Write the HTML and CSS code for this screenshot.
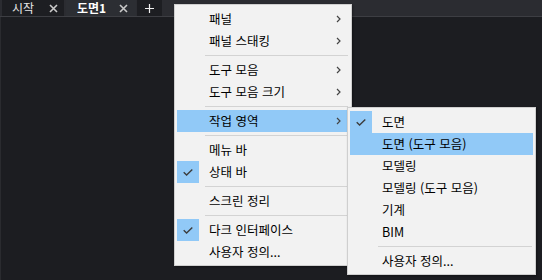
FILE: index.html
```html
<!DOCTYPE html>
<html lang="ko">
<head>
    <meta charset="UTF-8">
    <title>작업 영역 메뉴</title>
    <link rel="stylesheet" href="styles.css">
</head>
<body>

    <!-- Tabs -->
    <div class="tabbar">
        <div class="tab tab-start">
            <span class="tab-title">시작</span>
            <svg class="tab-close" width="9" height="9" viewBox="0 0 9 9"><path d="M1 1L8 8M8 1L1 8"/></svg>
        </div>
        <div class="tab tab-active">
            <span class="tab-title">도면1</span>
            <svg class="tab-close" width="9" height="9" viewBox="0 0 9 9"><path d="M1 1L8 8M8 1L1 8"/></svg>
        </div>
        <div class="tab tab-add">
            <svg width="9" height="9" viewBox="0 0 9 9"><path d="M4.5 0V9M0 4.5H9"/></svg>
        </div>
    </div>

    <div class="canvas"></div>

    <!-- Main context menu -->
    <div class="menu main-menu">
        <div class="item"><span class="check"></span><span class="label">패널</span><svg class="arrow" width="5" height="8" viewBox="0 0 5 8"><path d="M1 1L4 4L1 7"/></svg></div>
        <div class="item"><span class="check"></span><span class="label">패널 스태킹</span><svg class="arrow" width="5" height="8" viewBox="0 0 5 8"><path d="M1 1L4 4L1 7"/></svg></div>
        <div class="separator"></div>
        <div class="item"><span class="check"></span><span class="label">도구 모음</span><svg class="arrow" width="5" height="8" viewBox="0 0 5 8"><path d="M1 1L4 4L1 7"/></svg></div>
        <div class="item"><span class="check"></span><span class="label">도구 모음 크기</span><svg class="arrow" width="5" height="8" viewBox="0 0 5 8"><path d="M1 1L4 4L1 7"/></svg></div>
        <div class="separator"></div>
        <div class="item hover"><span class="check"></span><span class="label">작업 영역</span><svg class="arrow" width="5" height="8" viewBox="0 0 5 8"><path d="M1 1L4 4L1 7"/></svg></div>
        <div class="separator"></div>
        <div class="item"><span class="check"></span><span class="label">메뉴 바</span></div>
        <div class="item checked"><span class="check"><svg width="10" height="7" viewBox="0 0 10 7"><path d="M0.7 3.2L3.6 6L9.3 0.6"/></svg></span><span class="label">상태 바</span></div>
        <div class="separator"></div>
        <div class="item"><span class="check"></span><span class="label">스크린 정리</span></div>
        <div class="separator"></div>
        <div class="item checked"><span class="check"><svg width="10" height="7" viewBox="0 0 10 7"><path d="M0.7 3.2L3.6 6L9.3 0.6"/></svg></span><span class="label">다크 인터페이스</span></div>
        <div class="item"><span class="check"></span><span class="label">사용자 정의...</span></div>
    </div>

    <!-- Workspace submenu -->
    <div class="menu sub-menu">
        <div class="item checked"><span class="check"><svg width="10" height="7" viewBox="0 0 10 7"><path d="M0.7 3.2L3.6 6L9.3 0.6"/></svg></span><span class="label">도면</span></div>
        <div class="item hover"><span class="check"></span><span class="label">도면 (도구 모음)</span></div>
        <div class="item"><span class="check"></span><span class="label">모델링</span></div>
        <div class="item"><span class="check"></span><span class="label">모델링 (도구 모음)</span></div>
        <div class="item"><span class="check"></span><span class="label">기계</span></div>
        <div class="item"><span class="check"></span><span class="label">BIM</span></div>
        <div class="separator"></div>
        <div class="item"><span class="check"></span><span class="label">사용자 정의...</span></div>
    </div>

</body>
</html>
```

FILE: styles.css
```css
body {
    margin: 0;
    padding: 0;
    width: 542px;
    height: 280px;
    overflow: hidden;
    background-color: #1c1d21;
    font-family: "Noto Sans CJK KR", "Noto Sans", sans-serif;
    font-size: 12px;
    position: relative;
}

/* Tabs */
.tabbar {
    display: flex;
    height: 16px;
    padding-left: 2px;
    gap: 1px;
    background-color: #2b2c31;
    border-bottom: 1px solid #3d3e43;
}

.tab {
    display: flex;
    align-items: center;
    justify-content: space-between;
    height: 16px;
    box-sizing: border-box;
    background-color: #1d1e22;
    color: #e6e6e6;
}

.tab-start {
    width: 62px;
    padding: 0 6px 0 10px;
}

.tab-active {
    width: 70px;
    margin-left: 1px;
    padding: 0 8px 0 11px;
    background-color: #2c2e33;
    color: #ffffff;
    font-weight: bold;
}

.tab-add {
    width: 25px;
    justify-content: center;
}

.tab-title {
    line-height: 16px;
}

.tab svg path {
    stroke: #c9c9c9;
    stroke-width: 1.6;
    fill: none;
}

.tab-add svg path {
    stroke: #f0f0f0;
    stroke-width: 1.2;
}

.canvas {
    height: 263px;
    border-left: 1px solid #2a2b2f;
}

/* Menus */
.menu {
    position: absolute;
    background-color: #f2f2f2;
    border: 1px solid #cfcfcf;
    box-shadow: 1px 1px 2px rgba(0, 0, 0, 0.35);
    padding: 3px 0 2px;
    color: #000;
    font-size: 12.5px;
}

.main-menu {
    left: 174px;
    top: 4px;
    width: 176px;
}

.sub-menu {
    left: 347px;
    top: 107px;
    width: 187px;
}

.item {
    display: flex;
    align-items: center;
    height: 22px;
    margin: 0 2px;
}

.item.hover {
    background-color: #91c9f7;
}

.check {
    display: flex;
    align-items: center;
    justify-content: center;
    width: 22px;
    height: 22px;
    margin-right: 10px;
    flex-shrink: 0;
}

.item.checked .check {
    background-color: #91c9f7;
}

.check svg path {
    stroke: #3c3c3c;
    stroke-width: 1.4;
    fill: none;
}

.label {
    flex: 1;
    white-space: nowrap;
    line-height: 22px;
}

.arrow {
    margin-right: 8px;
}

.arrow path {
    stroke: #444;
    stroke-width: 1.2;
    fill: none;
}

.separator {
    height: 1px;
    margin: 3px 3px 3px 30px;
    background-color: #d3d3d3;
}
```
